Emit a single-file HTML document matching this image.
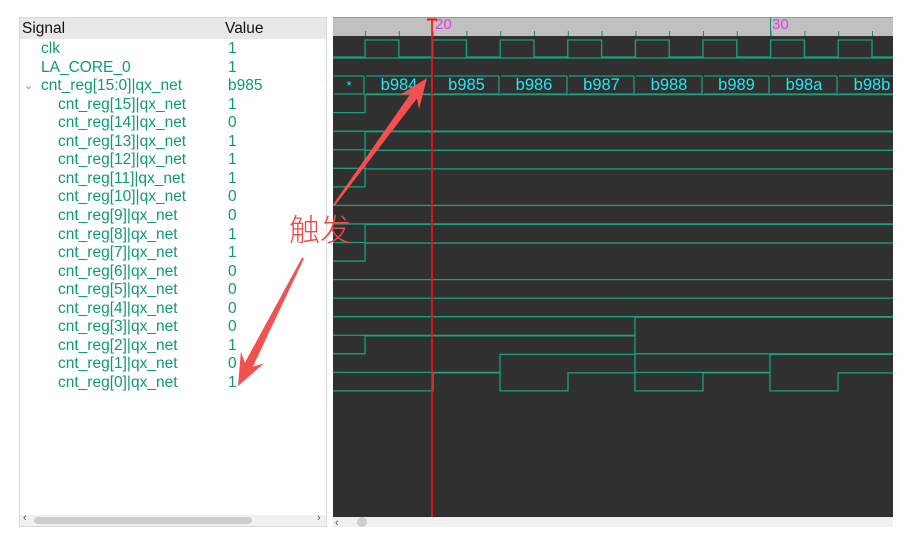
<!DOCTYPE html>
<html><head><meta charset="utf-8"><style>
body{margin:0;width:915px;height:543px;background:#fff;position:relative;overflow:hidden;font-family:"Liberation Sans","Noto Sans CJK SC",sans-serif}
#left{position:absolute;left:19px;top:17px;width:308px;height:510px;border:1px solid #d8d8d8;box-sizing:border-box;background:#fff}
#hdr{position:absolute;left:0;top:0;width:100%;height:21px;background:#e8e8e8;font-size:15.5px;color:#111}
.r{position:absolute;font-size:15.5px;color:#0f9a75;white-space:nowrap;line-height:18px}
</style></head><body>
<div id="left">
<div id="hdr"><span style="position:absolute;left:2px;top:2px">Signal</span><span style="position:absolute;left:205px;top:2px">Value</span></div>
<div id="rows"></div>
<div style="position:absolute;left:0;top:497px;width:306px;height:11px;background:#f0f0f0"></div>
<div style="position:absolute;left:14px;top:499px;width:218px;height:7px;border-radius:4px;background:#cdcdcd"></div>
<div style="position:absolute;left:3px;top:494px;font-size:11px;color:#555">‹</div>
<div style="position:absolute;left:297px;top:494px;font-size:11px;color:#555">›</div>
</div>
<svg id="w" style="position:absolute;left:0;top:0" width="915" height="543"></svg>
<div style="position:absolute;left:289px;top:205px;font-size:31px;color:#f24848;font-family:'Noto Sans CJK SC',sans-serif;font-weight:300">触发</div>
<script>
var names=[["clk","1",0],["LA_CORE_0","1",0],["cnt_reg[15:0]|qx_net","b985",-1]];
for(var k=15;k>=0;k--){var v=(0xb985>>k)&1;names.push(["cnt_reg["+k+"]|qx_net",""+v,1]);}
var h="";names.forEach(function(n,i){var c=49+18.55*i-17;var x=n[2]==1?38:21;
h+='<div class="r" style="left:'+x+'px;top:'+(c-10)+'px">'+n[0]+'</div><div class="r" style="left:208px;top:'+(c-10)+'px">'+n[1]+'</div>';
if(n[2]==-1)h+='<div class="r" style="left:4px;top:'+(c-10)+'px;color:#888;font-size:11px">&#8964;</div>';});
document.getElementById('rows').innerHTML=h;
var T=[365,433,500,568,635,703,770,838];
var s='<rect x="333" y="17" width="560" height="510" fill="#fff"/><rect x="333" y="17" width="560" height="19" fill="#c0c0c0"/><line x1="333" y1="17.5" x2="893" y2="17.5" stroke="#999"/><rect x="333" y="36" width="560" height="481" fill="#303030"/>';
for(var x=365.5;x<893;x+=33.8)s+='<line x1="'+x+'" y1="31" x2="'+x+'" y2="36" stroke="#1a8a78"/>';
s+='<text x="435" y="29" fill="#e040e0" font-size="15" font-family="Liberation Sans">20</text><text x="772" y="29" fill="#e040e0" font-size="15" font-family="Liberation Sans">30</text><line x1="770.5" y1="17" x2="770.5" y2="36" stroke="#1a8a78"/>';
var G='#1aa07c';
var p='M333 57 L365 57';for(var i=0;i<9;i++){var a=365+67.6*i,b=a+33.8;p+=' L'+a+' 40 L'+b+' 40 L'+b+' 57 L'+(a+67.6)+' 57';}
s+='<clipPath id="cp"><rect x="333" y="36" width="560" height="481"/></clipPath><g clip-path="url(#cp)" fill="none" stroke="'+G+'" stroke-width="1.3">';
s+='<path d="'+p+'"/><line x1="333" y1="58" x2="893" y2="58"/>';
var bx=[333].concat(T).concat([906]);var lab=['*','b984','b985','b986','b987','b988','b989','b98a','b98b'];
for(var i=0;i<bx.length-1;i++){var a=bx[i]+1,b=bx[i+1]-1;s+='<path d="M'+a+' 76 L'+b+' 76 M'+a+' 94 L'+b+' 94 M'+b+' 76 L'+b+' 94"/>';}
s+='</g><g clip-path="url(#cp)" font-family="Liberation Sans" font-size="16.5" fill="#20e8f0">';
for(var i=0;i<bx.length-1;i++){s+='<text x="'+((bx[i]+bx[i+1])/2)+'" y="90" text-anchor="middle"'+(i==0?' font-size="13"':'')+'>'+lab[i]+'</text>';}
s+='</g><g clip-path="url(#cp)" fill="none" stroke="'+G+'" stroke-width="1.3">';
var vals=[0,0xb984,0xb985,0xb986,0xb987,0xb988,0xb989,0xb98a,0xb98b];
for(var k=15;k>=0;k--){var c=49+18.55*(18-k);var hi=c-10,lo=c+8;var d='';
for(var i=0;i<bx.length-1;i++){var y=((vals[i]>>k)&1)?hi:lo;d+=(i==0?'M'+bx[i]:' L'+bx[i])+' '+y+' L'+bx[i+1]+' '+y;}
s+='<path d="'+d+'"/>';}
s+='</g>';
s+='<line x1="432" y1="19" x2="432" y2="517" stroke="#ff1010" stroke-width="1.6"/><line x1="427" y1="19.5" x2="437" y2="19.5" stroke="#ff1010" stroke-width="2"/>';
s+='<rect x="333" y="517" width="560" height="10" fill="#f0f0f0"/><circle cx="362" cy="522" r="5" fill="#cdcdcd"/><text x="335" y="526" font-size="11" fill="#555">‹</text>';
function arrow(x0,y0,x1,y1,hl,hw,tw0,tw1){var dx=x1-x0,dy=y1-y0,L=Math.hypot(dx,dy),ux=dx/L,uy=dy/L,nx=-uy,ny=ux;
var bxp=x1-ux*hl,byp=y1-uy*hl,nk=x1-ux*hl*0.75,nky=y1-uy*hl*0.75;
var pts=[[x0+nx*tw0,y0+ny*tw0],[nk+nx*tw1,nky+ny*tw1],[bxp+nx*hw,byp+ny*hw],[x1,y1],[bxp-nx*hw,byp-ny*hw],[nk-nx*tw1,nky-ny*tw1],[x0-nx*tw0,y0-ny*tw0]];
return '<polygon fill="#f55050" points="'+pts.map(function(p){return p[0].toFixed(1)+','+p[1].toFixed(1)}).join(' ')+'"/>';}
s+=arrow(334,205,427,78,30,12,1,4);
s+=arrow(303,258,238,386,32,13,1,4.5);
document.getElementById('w').innerHTML=s;
</script>
</body></html>
